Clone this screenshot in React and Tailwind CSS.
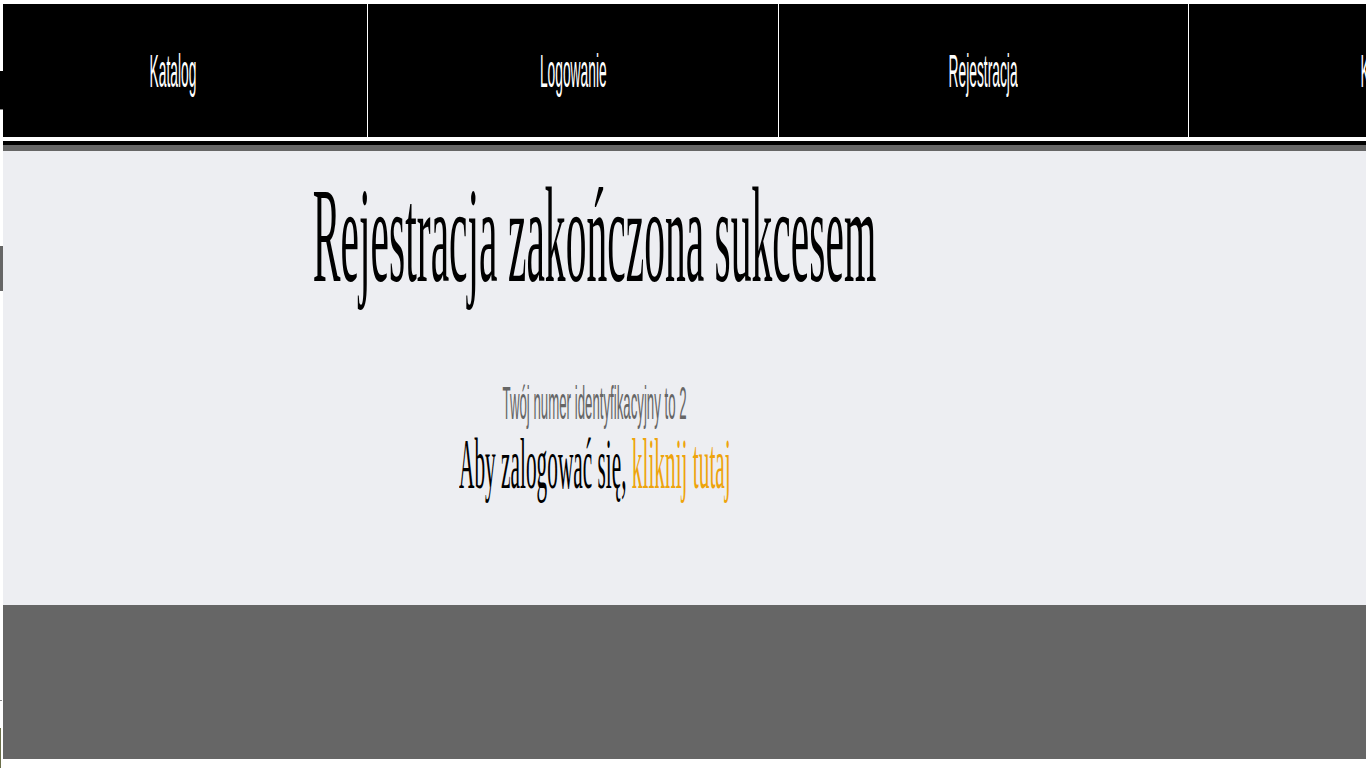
const navItems = [
  { label: 'Katalog', cell: 'w-[365px] pr-[24px] border-r border-white' },
  { label: 'Logowanie', cell: 'w-[411px] border-r border-white' },
  { label: 'Rejestracja', cell: 'w-[410px] border-r border-white' },
  { label: 'Kontakt', cell: 'w-[410px] pr-[21px]' },
];

const serif = "font-['Liberation_Serif',serif]";
const sans = "font-['Liberation_Sans',Arial,sans-serif]";

function NavCell({ label, cell }) {
  return (
    <a href="#" className={`flex h-full shrink-0 items-center justify-center ${cell}`}>
      <span className={`inline-block scale-x-[0.3] whitespace-nowrap text-[46px] leading-none text-white ${sans}`}>{label}</span>
    </a>
  );
}

export default function App() {
  return (
    <div className="flex h-[768px] w-full overflow-hidden bg-white">
      {/* left edge leftovers */}
      <div className="flex w-[3px] shrink-0 flex-col">
        <div className="mt-[71px] h-[38px] bg-black" />
        <div className="h-px bg-[#888]" />
        <div className="mt-[136px] h-[45px] bg-[#666]" />
        <div className="mt-[409px] h-px w-[2px] bg-[#888]" />
        <div className="mt-[27px] h-[40px] w-px bg-[#6b6f4a]" />
      </div>

      <div className="flex min-w-0 flex-1 flex-col pt-[4px]">
        <nav className="flex h-[133px] shrink-0 bg-black">
          {navItems.map((item) => (
            <NavCell key={item.label} {...item} />
          ))}
        </nav>
        <div className="h-[4px] shrink-0 bg-white" />
        <div className="h-[4px] shrink-0 bg-black" />
        <div className="h-[6px] shrink-0 bg-[#666]" />

        <main className="h-[454px] shrink-0 bg-[#edeef2]">
          <div className="flex w-[1184px] flex-col items-center pt-[17px]">
            <div className="flex w-full justify-center">
              <h1 className={`inline-block shrink-0 scale-x-[0.308] whitespace-nowrap text-[135px] font-normal leading-none text-black ${serif}`}>
                Rejestracja zakończona sukcesem
              </h1>
            </div>
            <div className="mt-[77px] flex w-full justify-center">
              <p className={`inline-block shrink-0 scale-x-[0.288] whitespace-nowrap text-[46px] leading-none text-[#666] ${sans}`}>
                Twój numer identyfikacyjny to 2
              </p>
            </div>
            <div className="mt-[2px] flex w-full justify-center">
              <p className={`inline-block shrink-0 scale-x-[0.296] whitespace-nowrap text-[72px] leading-none text-black ${serif}`}>
                Aby zalogować się, <a href="#" className="text-[#eea40c]">kliknij tutaj</a>
              </p>
            </div>
          </div>
        </main>

        <footer className="h-[154px] shrink-0 bg-[#666]" />
      </div>
    </div>
  );
}
